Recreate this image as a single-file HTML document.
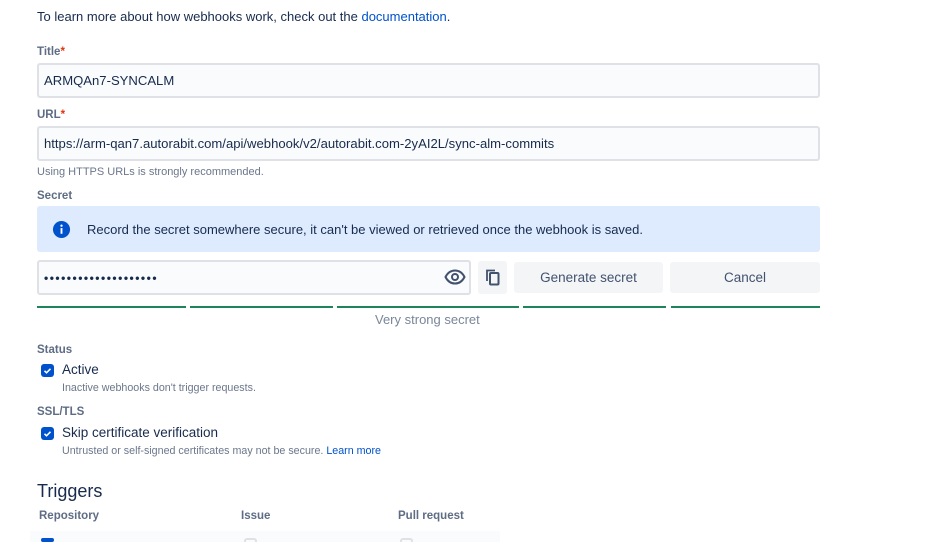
<!DOCTYPE html>
<html><head><meta charset="utf-8">
<style>
*{box-sizing:border-box;margin:0;padding:0}
html,body{width:940px;height:542px;overflow:hidden}
body{background:#fff;font-family:"Liberation Sans",Arial,sans-serif;color:#172b4d;position:relative}
.a{position:absolute}
.lbl{font-size:11.5px;font-weight:bold;color:#5e6c84}
.req{color:#de350b}
.inp{border:2px solid #dfe1e6;background:#fafbfc;border-radius:3px;font-size:13.1px;padding-left:5px;display:flex;align-items:center}
.help{font-size:10.7px;color:#6b778c}
.btn{background:#f4f5f7;border-radius:3px;font-size:13.5px;color:#42526e;display:flex;align-items:center;justify-content:center}
.bar{height:2px;background:#1f845a;top:306px}
.cb{width:13px;height:13px;border-radius:3px;background:#0052cc}
</style></head><body>
<div class="a" style="left:37px;top:9px;font-size:13px;">To learn more about how webhooks work, check out the <span style="color:#0052cc">documentation</span>.</div>

<div class="a lbl" style="left:37px;top:46px">Title<span class="req">*</span></div>
<div class="a inp" style="left:37px;top:63px;width:783px;height:35px">ARMQAn7-SYNCALM</div>

<div class="a lbl" style="left:37px;top:109px">URL<span class="req">*</span></div>
<div class="a inp" style="left:37px;top:126px;width:783px;height:35px">https://arm-qan7.autorabit.com/api/webhook/v2/autorabit.com-2yAI2L/sync-alm-commits</div>
<div class="a help" style="left:37px;top:166px;font-size:11px">Using HTTPS URLs is strongly recommended.</div>

<div class="a lbl" style="left:37px;top:190px">Secret</div>
<div class="a" style="left:37px;top:206px;width:783px;height:46px;background:#deebff;border-radius:3px"></div>
<svg class="a" style="left:52px;top:220px" width="19" height="19" viewBox="0 0 20 20"><circle cx="10" cy="10" r="9" fill="#0052cc"/><rect x="9" y="8.5" width="2" height="6" fill="#fff"/><circle cx="10" cy="6" r="1.2" fill="#fff"/></svg>
<div class="a" style="left:87px;top:222px;font-size:13px">Record the secret somewhere secure, it can't be viewed or retrieved once the webhook is saved.</div>

<div class="a inp" style="left:37px;top:260px;width:434px;height:35px;font-size:12px;letter-spacing:1.5px;font-weight:bold">••••••••••••••••••••</div>
<svg class="a" style="left:444px;top:268px" width="22" height="18" viewBox="0 0 22 18"><path d="M1.5 9C4 4 7.5 2.5 11 2.5S18 4 20.5 9C18 14 14.5 15.5 11 15.5S4 14 1.5 9Z" fill="none" stroke="#42526e" stroke-width="2"/><circle cx="11" cy="9" r="3" fill="none" stroke="#42526e" stroke-width="2"/></svg>
<div class="a btn" style="left:478px;top:261px;width:29px;height:33px">
<svg width="14" height="17" viewBox="0 0 14 17"><path d="M1 12V1.5h8" fill="none" stroke="#42526e" stroke-width="1.8"/><rect x="4" y="4" width="8.5" height="11.5" rx="1" fill="none" stroke="#42526e" stroke-width="2"/></svg></div>
<div class="a btn" style="left:514px;top:262px;width:149px;height:31px">Generate secret</div>
<div class="a btn" style="left:670px;top:262px;width:150px;height:31px">Cancel</div>
<div class="a bar" style="left:37px;width:149px"></div>
<div class="a bar" style="left:190px;width:143px"></div>
<div class="a bar" style="left:337px;width:182px"></div>
<div class="a bar" style="left:523px;width:143px"></div>
<div class="a bar" style="left:671px;width:149px"></div>
<div class="a" style="left:375px;top:312px;font-size:13px;color:#7a869a">Very strong secret</div>

<div class="a lbl" style="left:37px;top:344px">Status</div>
<svg class="a" style="left:41px;top:364px" width="13" height="13" viewBox="0 0 13 13"><rect width="13" height="13" rx="3" fill="#0052cc"/><path d="M3.5 6.8l2 2 4-4" fill="none" stroke="#fff" stroke-width="1.6"/></svg>
<div class="a" style="left:62px;top:362px;font-size:13.5px">Active</div>
<div class="a help" style="left:62px;top:382px">Inactive webhooks don't trigger requests.</div>

<div class="a lbl" style="left:37px;top:406px">SSL/TLS</div>
<svg class="a" style="left:41px;top:427px" width="13" height="13" viewBox="0 0 13 13"><rect width="13" height="13" rx="3" fill="#0052cc"/><path d="M3.5 6.8l2 2 4-4" fill="none" stroke="#fff" stroke-width="1.6"/></svg>
<div class="a" style="left:62px;top:425px;font-size:13.5px">Skip certificate verification</div>
<div class="a help" style="left:62px;top:445px">Untrusted or self-signed certificates may not be secure. <span style="color:#0052cc">Learn more</span></div>

<div class="a" style="left:37px;top:481px;font-size:18px">Triggers</div>
<div class="a lbl" style="left:39px;top:510px">Repository</div>
<div class="a lbl" style="left:241px;top:510px">Issue</div>
<div class="a lbl" style="left:398px;top:510px">Pull request</div>
<div class="a" style="left:30px;top:531px;width:470px;height:11px;background:#fafbfc"></div>
<div class="a cb" style="left:41px;top:538px;height:4px"></div>
<div class="a" style="left:244px;top:538px;width:13px;height:4px;border:2px solid #dfe1e6;border-bottom:0;border-radius:3px 3px 0 0"></div>
<div class="a" style="left:400px;top:538px;width:13px;height:4px;border:2px solid #dfe1e6;border-bottom:0;border-radius:3px 3px 0 0"></div>
</body></html>
